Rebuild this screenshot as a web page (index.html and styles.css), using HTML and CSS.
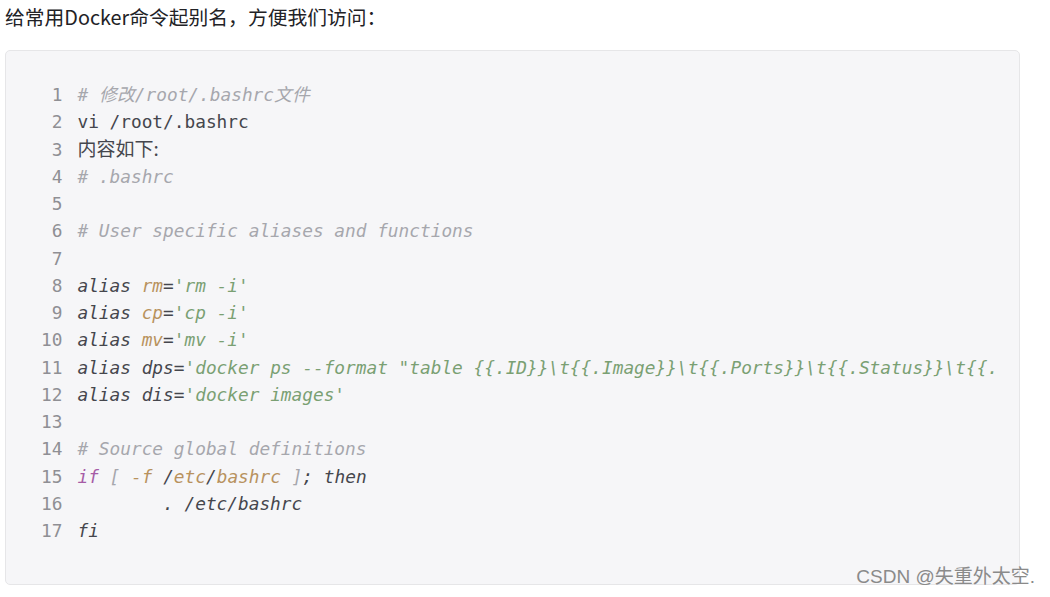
FILE: index.html
```html
<!DOCTYPE html>
<html lang="zh-CN">
<head>
<meta charset="utf-8">
<title>Docker alias</title>
<link rel="stylesheet" href="styles.css">
</head>
<body>
<p class="intro">给常用Docker命令起别名，方便我们访问：</p>
<div class="code-wrap">
  <div class="code">
    <ol class="nums">
      <li>1</li><li>2</li><li>3</li><li>4</li><li>5</li><li>6</li><li>7</li><li>8</li><li>9</li><li>10</li><li>11</li><li>12</li><li>13</li><li>14</li><li>15</li><li>16</li><li>17</li>
    </ol>
    <pre class="lines"><span class="c"># 修改/root/.bashrc文件</span>
vi /root/.bashrc
<span class="cjk">内容如下:</span>
<span class="c"># .bashrc</span>

<span class="c"># User specific aliases and functions</span>

<span class="i">alias <span class="a">rm</span>=<span class="s">'rm -i'</span></span>
<span class="i">alias <span class="a">cp</span>=<span class="s">'cp -i'</span></span>
<span class="i">alias <span class="a">mv</span>=<span class="s">'mv -i'</span></span>
<span class="i">alias dps=<span class="s">'docker ps --format "table {{.ID}}\t{{.Image}}\t{{.Ports}}\t{{.Status}}\t{{.</span></span>
<span class="i">alias dis=<span class="s">'docker images'</span></span>

<span class="c"># Source global definitions</span>
<span class="i"><span class="k">if</span> <span class="g">[</span> <span class="a">-f</span> /<span class="a">etc</span>/<span class="a">bashrc</span> <span class="g">]</span>; then</span>
<span class="i">        . /etc/bashrc</span>
<span class="i">fi</span></pre>
  </div>
  <span class="mark">CSDN @失重外太空.</span>
</div>
</body>
</html>
```

FILE: styles.css
```css
html, body {
  margin: 0;
  padding: 0;
  background: #ffffff;
}
body {
  padding: 0 30px 0 5px;
  width: 1015px;
}
.intro {
  margin: 0;
  padding-top: 3px;
  height: 47px;
  font-family: "Noto Sans CJK SC", "Noto Sans", sans-serif;
  font-size: 19.8px;
  line-height: 27px;
  color: #222226;
}
.code-wrap {
  position: relative;
  height: 533px;
  background: #f6f6f8;
  border: 1px solid #e6e6e8;
  border-radius: 5px;
}
.code {
  display: flex;
  gap: 15px;
  padding: 30px 16px 0 35px;
  overflow: hidden;
  font-family: "DejaVu Sans Mono", monospace;
  font-size: 17.8px;
  line-height: 27.25px;
}
.nums {
  list-style: none;
  margin: 0;
  padding: 0;
  text-align: right;
  color: #8f8f94;
  flex: none;
}
.lines {
  margin: 0;
  font: inherit;
  color: #45464d;
  overflow: hidden;
  white-space: pre;
  flex: 1;
  min-width: 0;
}
.cjk {
  font-family: "Noto Sans CJK SC", sans-serif;
  font-size: 19px;
  line-height: 18px;
}
.c {
  color: #a6a7ad;
  font-style: italic;
}
.i {
  font-style: italic;
}
.s {
  color: #7aa073;
}
.a {
  color: #b8925e;
}
.k {
  color: #a65ca6;
}
.g {
  color: #a6a7ad;
}
.mark {
  position: absolute;
  right: -16px;
  bottom: -4px;
  font-family: "Liberation Sans", "Noto Sans CJK SC", sans-serif;
  font-size: 19px;
  line-height: 22px;
  color: #8a8a8a;
}
```
